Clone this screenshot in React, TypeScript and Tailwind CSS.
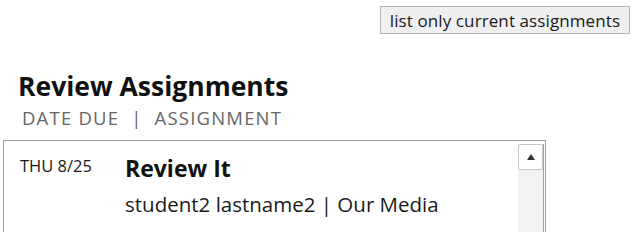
export default function App() {
  return (
    <div className="w-[640px] h-[232px] bg-white overflow-hidden relative" style={{ fontFamily: '"Open Sans", sans-serif' }}>
      <div className="flex justify-end pr-[10px] pt-[6px]">
        <button className="h-[28px] w-[250px] bg-[#efefef] border border-[#b4b4b4] text-[17px] text-[#1a1a1a] leading-none tracking-[0.1px] flex items-center justify-center">
          list only current assignments
        </button>
      </div>
      <div className="pl-[18px] mt-[37px]">
        <h1 className="text-[26.5px] font-bold leading-[30px] text-[#111]">Review Assignments</h1>
        <div className="pl-[4px] text-[18.5px] leading-[22px] text-[#666] tracking-[1.2px] mt-[6px] flex">
          <span>DATE DUE</span>
          <span className="ml-[12px]">|</span>
          <span className="ml-[12px]">ASSIGNMENT</span>
        </div>
      </div>
      <div className="ml-[3px] mt-[11px] w-[543px] h-[120px] border border-[#a0a0a0] flex">
        <div className="flex-1 flex pt-[13px]">
          <div className="w-[121px] pl-[16px] text-[16.5px] text-[#1a1a1a] leading-[22px] pt-[1px]">THU 8/25</div>
          <div className="flex flex-col">
            <div className="text-[23px] font-bold text-[#111] leading-[28px]">Review It</div>
            <div className="text-[20.5px] text-[#1a1a1a] leading-[26px] mt-[9px]">student2 lastname2 | Our Media</div>
          </div>
        </div>
        <div className="w-[26px] mr-[1px] mt-[3px] flex flex-col bg-[#f2f2f2] border-r border-[#a0a0a0]">
          <div className="h-[26px] bg-white border border-[#c8c8c8] rounded-[2px] flex items-center justify-center">
            <svg width="8" height="6" viewBox="0 0 8 6"><path d="M4 0 L8 6 L0 6 Z" fill="#333" /></svg>
          </div>
        </div>
      </div>
    </div>
  );
}
